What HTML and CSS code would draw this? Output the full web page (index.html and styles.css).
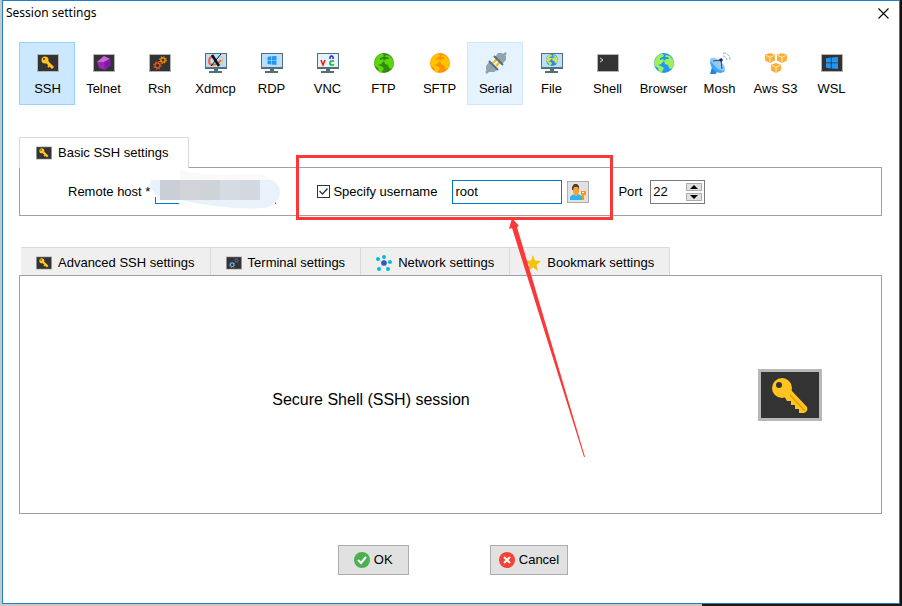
FILE: index.html
```html
<!DOCTYPE html>
<html lang="en">
<head>
<meta charset="utf-8">
<title>Session settings</title>
<link rel="stylesheet" href="styles.css">
</head>
<body>
<svg class="sprite" aria-hidden="true">
  <symbol id="screen" viewBox="0 0 22 22"><path fill="#b4b4b4" d="M0 2h22v18H0z"/><path fill="#333" d="M1 3h20v16H1z"/></symbol>
  <symbol id="monitor" viewBox="0 0 22 22"><path fill="#546e7a" d="M0 1h22v16H0zM9 17h4v2h4v2H4v-2h5z"/><path fill="#bbdefb" d="M1 2h20v13H1z"/></symbol>
  <symbol id="key" viewBox="0 0 64 52">
    <path fill="#b8b8b8" d="M0 0h64v52H0z"/><path fill="#333" d="M3 3h58v46H3z"/>
    <path fill="#ffc41f" d="M26 27l7-6 16 17c1 3 0 5-3 6h-5v-4h-4v-4h-4v-4h-4z"/>
    <circle cx="24" cy="19" r="10" fill="#ffc41f"/><circle cx="21" cy="16" r="3" fill="#333"/>
    <path d="M32 26l15 16" stroke="#e0a000" stroke-width="1.5"/>
  </symbol>
  <symbol id="key-small" viewBox="0 0 22 22"><use href="#screen"/><path fill="none" stroke="#ffc41f" stroke-width="3" d="M9 9l7 7"/><path stroke="#ffc41f" stroke-width="2" d="M13 13l-2 2"/><circle cx="8" cy="8" r="3.5" fill="#ffc41f"/><circle cx="7" cy="7" r="1" fill="#333"/></symbol>
  <symbol id="gear" viewBox="0 0 10 10"><circle cx="5" cy="5" r="2.7" fill="none" stroke="currentColor" stroke-width="1.6"/><circle cx="5" cy="5" r="4.1" fill="none" stroke="currentColor" stroke-width="1.4" stroke-dasharray="1.6 1.62"/></symbol>
  <symbol id="windows" viewBox="0 0 10 10"><path fill="#2196f3" d="M0 1l4-.6v4.2H0zM4.7.4L10 0v4.6H4.7zM0 5.3h4v4.2L0 9zM4.7 5.3H10V10l-5.3-.5z"/></symbol>
  <symbol id="globe" viewBox="0 0 20 20"><circle cx="10" cy="10" r="10" fill="var(--sea)"/><path fill="var(--land)" d="M2 5c1-2 3-4 6-4l2 1-1 2-3 1v2l3-1 1 2-3 3-3 1 3 1 3 2-1 2-2 3-2-1-1-4-3-2-1-3zM12 2l4 1 3 4 1 4-1 3-2 2-2-1-1-3-3-1-1-3 2-2 3 0-1-2-3 0z"/></symbol>
  <symbol id="cube" viewBox="0 0 12 12"><path fill="#fbb03b" d="M6 0l6 2v7l-6 3-6-3V2z"/><path fill="none" stroke="#fff2d6" d="M1 3l5 2 5-2M6 5v6"/></symbol>
</svg>

<main class="dialog">
  <header class="titlebar">
    <h1>Session settings</h1>
    <button class="close" type="button" aria-label="Close"><svg width="11" height="11" viewBox="0 0 11 11"><path d="M.5.5l10 10M10.5.5l-10 10" stroke="#000" stroke-width="1.1"/></svg></button>
  </header>

  <nav class="types" aria-label="Session type">
    <button class="type selected" type="button"><svg viewBox="0 0 22 22"><use href="#key-small"/></svg>SSH</button>
    <button class="type" type="button"><svg viewBox="0 0 22 22"><use href="#screen"/><path fill="#9c27b0" d="M11 4l6 3 1 6-6 5-6-2-2-6z"/><path fill="#ce63dc" d="M11 4l6 3-6 3-7 0z"/><path fill="#7b1fa2" d="M11 10l6-3 1 6-6 5z"/></svg>Telnet</button>
    <button class="type" type="button"><svg viewBox="0 0 22 22"><use href="#screen"/><g color="#e6510f"><use href="#gear" x="4" y="9" width="9" height="9"/></g><g color="#fb9804"><use href="#gear" x="10" y="4" width="8" height="8"/></g></svg>Rsh</button>
    <button class="type" type="button"><svg viewBox="0 0 22 22"><use href="#monitor"/><path fill="none" stroke="#f4623a" stroke-width="2" d="M8 4C3 6 3 12 7 13c4 0 7-2 9-5"/><path fill="none" stroke="#f3b562" d="M16 4c3 3 2 6 0 9"/><path d="M7 3l7 11" stroke="#111" stroke-width="2.6"/><path d="M16 2L6 14" stroke="#111"/></svg>Xdmcp</button>
    <button class="type" type="button"><svg viewBox="0 0 22 22"><use href="#monitor"/><use href="#windows" x="6" y="4" width="10" height="9"/></svg>RDP</button>
    <button class="type" type="button"><svg viewBox="0 0 22 22"><use href="#monitor"/><path fill="#e3f2fd" d="M1 2h20v13H1z"/><g fill="none" stroke-width="1.5"><path stroke="#f11" d="M4 8l2 5 2-5"/><path stroke="#22e" d="M13 7V5l1-1h1l1 1v2"/><path stroke="#0b2" d="M17 9h-3l-1 1v2l1 1h3"/></g></svg>VNC</button>
    <button class="type" type="button"><svg class="green" viewBox="0 0 22 22"><use href="#globe" x="1" y="1" width="20" height="20"/></svg>FTP</button>
    <button class="type" type="button"><svg class="orange" viewBox="0 0 22 22"><use href="#globe" x="1" y="1" width="20" height="20"/></svg>SFTP</button>
    <button class="type hover" type="button"><svg viewBox="0 0 22 22"><path d="M1 21l4-4M17 5l4-4" stroke="#90a4ae" stroke-width="2.5"/><path fill="#90a4ae" d="M4 10l8 8-3 2-5 0-3-2 0-4zM10 5l3-4 4 0 4 3 0 4-4 4z"/><path d="M8 11l4-4M11 14l4-4" stroke="#ffb300" stroke-width="2"/><path d="M4 9l9 9M9 4l9 9" stroke="#546e7a" stroke-width="2"/></svg>Serial</button>
    <button class="type" type="button"><svg class="file" viewBox="0 0 22 22"><use href="#monitor"/><use href="#globe" x="5" y="2" width="12" height="12"/></svg>File</button>
    <button class="type" type="button"><svg viewBox="0 0 22 22"><use href="#screen"/><path d="M3 6l3 2-3 2" fill="none" stroke="#ddd"/></svg>Shell</button>
    <button class="type" type="button"><svg class="blue" viewBox="0 0 22 22"><use href="#globe" x="1" y="1" width="20" height="20"/></svg>Browser</button>
    <button class="type" type="button"><svg viewBox="0 0 22 22"><path fill="#1e88e5" d="M3 15l5 4-1 3H1z"/><path fill="#42a5f5" d="M2 6c-2 5 0 10 4 13s8 2 10 0z"/><path fill="#90caf9" d="M2 6c3-1 7 1 10 4s5 6 4 9c-4 0-8-2-11-6C3 11 1 8 2 6z"/><path d="M4 9l8-1 1 9" fill="none" stroke="#37474f"/><circle cx="12" cy="8" r="1.800" fill="#1a237e"/><path d="M14 4c2 0 4 2 4 4M14 1c5 0 7 3 7 7" fill="none" stroke="#64b5f6" stroke-dasharray="3 1"/></svg>Mosh</button>
    <button class="type" type="button"><svg viewBox="0 0 22 22"><use href="#cube" x="0" y="1" width="10" height="10"/><use href="#cube" x="12" y="1" width="10" height="10"/><use href="#cube" x="6" y="11" width="10" height="10"/></svg>Aws S3</button>
    <button class="type" type="button"><svg viewBox="0 0 22 22"><use href="#screen"/><use href="#windows" x="5" y="5" width="12" height="12"/></svg>WSL</button>
  </nav>

  <section class="basic">
    <div class="tabs">
      <button class="tab active" type="button"><svg viewBox="0 0 22 22"><use href="#key-small"/></svg>Basic SSH settings</button>
    </div>
    <form class="fields">
      <label for="host">Remote host *</label>
      <div class="host">
        <input id="host" type="text">
        <svg class="mask" width="132" height="40" viewBox="0 0 132 40" aria-hidden="true">
          <path fill="#fff" d="M5 6h123v25h-2v4H30v-8H5z"/>
          <path fill="#fafafa" d="M31 0c16 4 42 6 70 4 10 0 19 1 22 8H31z"/>
          <path fill="#e9f2fb" d="M2 10h121c5 3 8 7 8 12 0 8-7 15-16 16-22 2-58-2-84-8-12 0-20 0-24-6-6-5-6-9-5-14z"/>
          <path fill="#cacfd6" d="M11 10h20v20H11z"/><path fill="#d1d5d9" d="M31 10h20v20H31z"/><path fill="#ced3d8" d="M51 10h20v20H51z"/><path fill="#d6dbe3" d="M71 10h20v20H71z"/><path fill="#d3d8e0" d="M91 10h20v20H91z"/>
        </svg>
      </div>
      <div class="user">
        <input id="specify" type="checkbox" checked>
        <label for="specify">Specify username</label>
        <input class="name" type="text" value="root" aria-label="Username">
        <button class="pick" type="button" aria-label="Choose user"><svg width="16" height="16" viewBox="0 0 16 16"><path fill="#29b6f6" d="M0 16v-3l2-2 3-1h3l4 2v4z"/><path fill="#f9a032" d="M3 3h6v5l-2 4H5L3 8z"/><path fill="#4e4238" d="M2 6V3l2-3h3l2 2v4L8 3H4L3 6z"/><path fill="#ff9800" d="M11 7h5v4h-2v5h-2v-5h-1z"/><path fill="#fff" d="M12 8h2v1h-2z"/></svg></button>
        <svg class="callout" width="318" height="304" viewBox="0 0 318 304" aria-hidden="true">
          <path d="M1.500 1.500h314v62H1.500z" fill="none" stroke="#fb3838" stroke-width="3"/>
          <path d="M216 63l7 8-2 1 68 230h-1L216 73l-3 1z" fill="#fb3838"/>
        </svg>
      </div>
      <label for="port">Port</label>
      <div class="spinner">
        <input id="port" type="number" value="22">
        <div class="steps">
          <button type="button" aria-label="Increase"><svg width="8" height="4" viewBox="0 0 8 4"><path d="M0 4l4-4 4 4z"/></svg></button>
          <button type="button" aria-label="Decrease"><svg width="8" height="4" viewBox="0 0 8 4"><path d="M0 0l4 4 4-4z"/></svg></button>
        </div>
      </div>
    </form>
  </section>

  <section class="advanced">
    <div class="tabs inset">
      <button class="tab" type="button"><svg viewBox="0 0 22 22"><use href="#key-small"/></svg>Advanced SSH settings</button>
      <button class="tab" type="button"><svg viewBox="0 0 22 22"><use href="#screen"/><g color="#64b5f6"><use href="#gear" x="4" y="9" width="9" height="9"/></g><g color="#5c6bc0"><use href="#gear" x="11" y="4" width="7" height="7"/></g></svg>Terminal settings</button>
      <button class="tab" type="button"><svg viewBox="0 0 16 16"><path d="M8 8V2M8 8L2 4M8 8l6-1M8 8l4 6M8 8l-5 6" stroke="#b8dfe8"/><g fill="#00bcd4"><circle cx="8" cy="2" r="2"/><circle cx="2" cy="4" r="2"/><circle cx="14" cy="7" r="2"/><circle cx="12" cy="14" r="2"/><circle cx="3" cy="14" r="2"/></g><circle cx="8" cy="8" r="2.800" fill="#3f51b5"/></svg>Network settings</button>
      <button class="tab" type="button"><svg viewBox="0 0 16 16"><path fill="#f4c20d" d="M8 0l2 5.500 6 .5-4.500 4 1.500 6-5-3.500L3 16l1.500-6L0 6l6-.5z"/></svg>Bookmark settings</button>
    </div>
    <div class="summary">
      <p>Secure Shell (SSH) session</p>
      <svg class="badge" width="64" height="52" viewBox="0 0 64 52"><use href="#key"/></svg>
    </div>
  </section>

  <footer class="actions">
    <button type="button"><svg width="16" height="16" viewBox="0 0 16 16"><circle cx="8" cy="8" r="8" fill="#4caf50"/><path d="M4 8l3 3 5-6" fill="none" stroke="#fff" stroke-width="2"/></svg>OK</button>
    <button type="button"><svg width="16" height="16" viewBox="0 0 16 16"><circle cx="8" cy="8" r="8" fill="#f44336"/><path d="M5 5l6 6M11 5l-6 6" stroke="#fff" stroke-width="2"/></svg>Cancel</button>
  </footer>
</main>
</body>
</html>
```
FILE: styles.css
```css
* { box-sizing: border-box; }

body {
  margin: 0;
  height: 100vh;
  padding: 0 2px 2px;
  background:
    linear-gradient(#1a1a1a, #1a1a1a) right bottom / 200px 2px no-repeat,
    linear-gradient(#111, #111) right / 2px 100% no-repeat,
    #c9c9cb;
  font: 13px/16px "Liberation Sans", Arial, sans-serif;
  color: #000;
}

.sprite { position: absolute; width: 0; height: 0; }

button, input { font: inherit; color: inherit; margin: 0; border-radius: 0; }

.dialog {
  display: flex;
  flex-direction: column;
  height: 100%;
  border: 1px solid #1e80cc;
  background: #fff;
}

.titlebar {
  display: flex;
  justify-content: space-between;
  align-items: center;
  height: 24px;
  padding: 0 10px 0 3px;
}
.titlebar h1 {
  margin: 0;
  font: 12px/16px "Noto Sans", sans-serif;
}
.close { display: flex; padding: 0; border: 0; background: none; }

.types { display: flex; margin: 17px 16px 0; }
.type {
  display: flex;
  flex-direction: column;
  align-items: center;
  gap: 7px;
  width: 56px;
  height: 63px;
  padding: 9px 0 0 1px;
  border: 1px solid transparent;
  background: none;
  white-space: nowrap;
}
.type svg { width: 22px; height: 22px; }
.selected { background: #cce8ff; border-color: #99d1ff; }
.hover { background: #e5f3ff; border-color: #cce8ff; }

.green { --sea: #2e8b10; --land: #5fd50f; }
.orange { --sea: #ff9100; --land: #ffc400; }
.blue { --sea: #2196f3; --land: #9df05a; }
.file { --sea: #1e90e8; --land: #d4e157; }

.basic { margin: 32px 17px 0 16px; }
.advanced {
  display: flex;
  flex: 1;
  flex-direction: column;
  margin: 31px 17px 0 16px;
}

.tabs { display: flex; }
.tab {
  display: flex;
  align-items: center;
  gap: 6px;
  height: 28px;
  padding: 2px 15px 0;
  border: solid #d9d9d9;
  border-width: 1px 1px 0 0;
  background: #efefef;
  white-space: nowrap;
}
.tab svg { width: 16px; height: 16px; }
.tab.active {
  height: 31px;
  margin-bottom: -1px;
  padding: 0 19px 0 16px;
  border-width: 1px 1px 0;
  background: #fff;
  z-index: 1;
}
.inset { padding-left: 2px; }

.fields {
  display: flex;
  align-items: center;
  height: 49px;
  padding-left: 48px;
  border: 1px solid #a0a0a0;
}
.host { position: relative; margin: 0 41px 0 5px; }
.host input { display: block; width: 121px; height: 24px; border: 1px solid #0078d7; }
.mask { position: absolute; left: -6px; top: -10px; }

.user { position: relative; display: flex; align-items: center; }
.user [type="checkbox"] {
  appearance: none;
  width: 13px;
  height: 13px;
  margin-right: 3px;
  border: 1px solid #333;
  background: #fff;
}
.user [type="checkbox"]:checked {
  background: #fff url("data:image/svg+xml,%3Csvg xmlns='http://www.w3.org/2000/svg' viewBox='0 0 11 11'%3E%3Cpath d='M1.500 5l3 3 5-5.500' fill='none' stroke='%23333' stroke-width='1.300'/%3E%3C/svg%3E");
}
.name {
  width: 110px;
  height: 24px;
  margin: 0 5px 0 15px;
  padding: 0 2px;
  border: 1px solid #0078d7;
}
.pick {
  display: flex;
  align-items: center;
  justify-content: center;
  width: 22px;
  height: 22px;
  margin-right: 29px;
  padding: 0;
  border: 1px solid #adadad;
  background: #e1e1e1;
}
.callout { position: absolute; left: -21px; top: -25px; z-index: 2; pointer-events: none; }

.spinner {
  display: flex;
  justify-content: space-between;
  width: 55px;
  height: 24px;
  margin-left: 8px;
  padding: 2px;
  border: 1px solid #7a7a7a;
}
.spinner input {
  width: 30px;
  padding: 0;
  border: 0;
  outline: 0;
  appearance: textfield;
}
.steps { display: flex; flex-direction: column; gap: 2px; }
.steps button {
  display: flex;
  align-items: center;
  justify-content: center;
  width: 16px;
  height: 8px;
  padding: 0;
  border: 1px solid #adadad;
  background: #e1e1e1;
}

.summary {
  display: grid;
  grid-template-columns: 1fr auto;
  align-items: center;
  flex: 1;
  padding-right: 59px;
  border: 1px solid #a0a0a0;
}
.summary p {
  margin: 10px 0 0;
  padding-right: 36px;
  font-size: 16px;
  line-height: 20px;
  text-align: center;
}

.actions {
  display: flex;
  justify-content: center;
  gap: 81px;
  margin: 31px 0 28px 4px;
}
.actions button {
  display: flex;
  align-items: center;
  justify-content: center;
  gap: 4px;
  min-width: 71px;
  height: 30px;
  padding: 0 8px;
  border: 1px solid #adadad;
  background: #e1e1e1;
}
```
